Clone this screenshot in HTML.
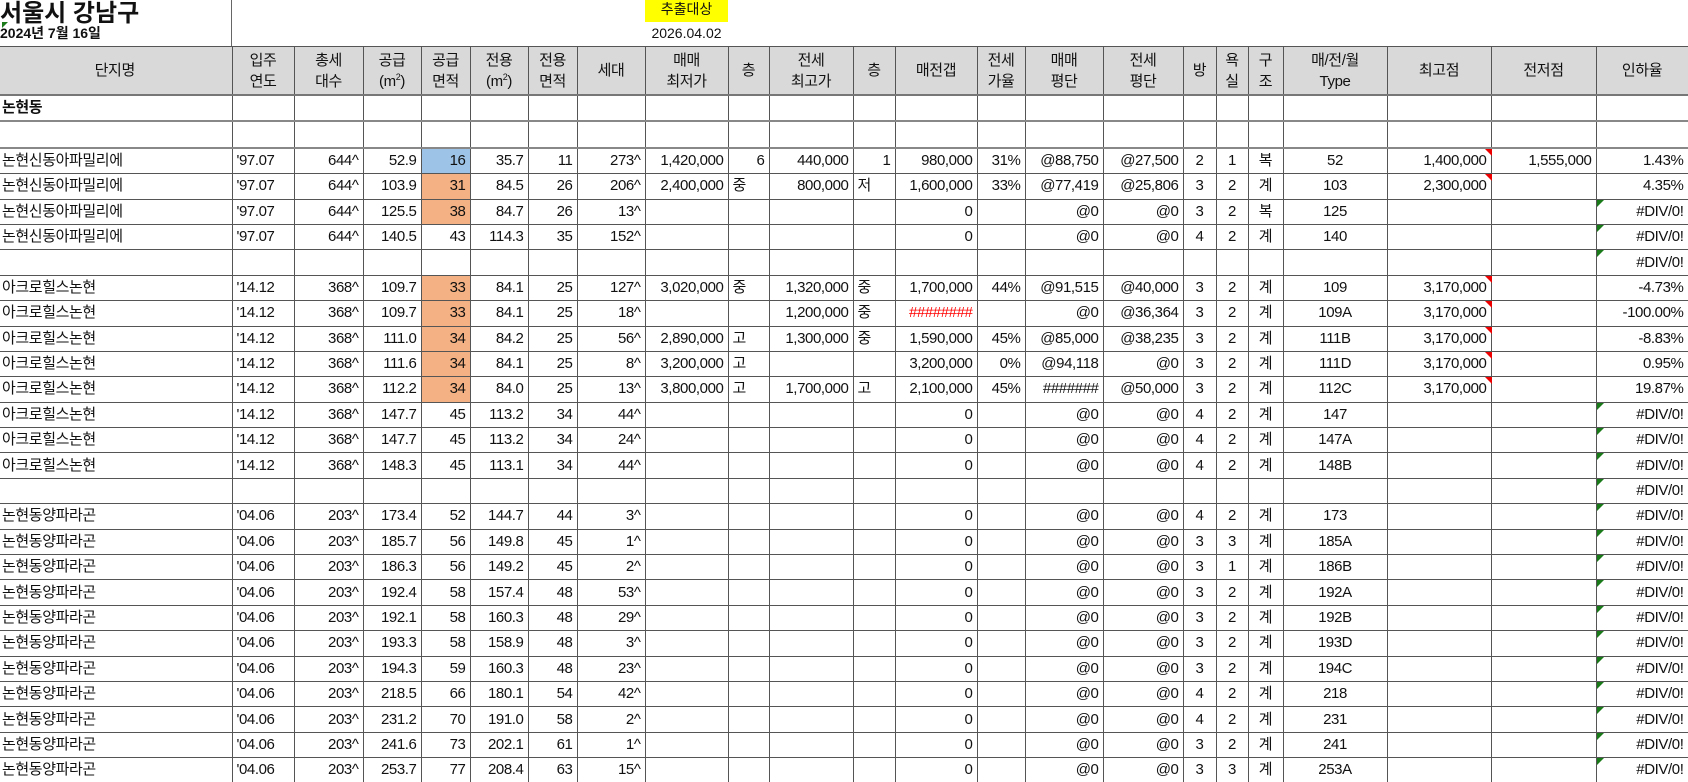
<!DOCTYPE html>
<html><head><meta charset="utf-8">
<style>
html,body{margin:0;padding:0;background:#fff;width:1688px;height:782px;overflow:hidden}
body{font-family:"Liberation Sans","Noto Sans CJK KR",sans-serif;color:#111;position:relative}
.t1{position:absolute;left:0;top:-7px;font-size:24px;font-weight:bold}
.t2{position:absolute;left:0;top:23px;font-size:14px;font-weight:bold}
.gtri{position:absolute;width:0;height:0;border-top:6px solid #1a7a1a;border-right:6px solid transparent}
.yel{position:absolute;left:645px;top:0;width:83px;height:22px;background:#ffff00;font-size:14px;text-align:center;line-height:18px}
.dt{position:absolute;left:645px;top:25px;width:83px;text-align:center;font-size:14px}
.vl{position:absolute;left:231px;top:0;width:1px;height:46px;background:#666}
table{position:absolute;left:0;top:46px;border-collapse:collapse;table-layout:fixed;width:1688px;font-size:15px}
td{border:1px solid #555;padding:0 4px;white-space:nowrap;overflow:visible;height:24.4px;line-height:20px;text-align:right;position:relative;letter-spacing:-0.4px}
tr.h td{background:#d9d9d9;text-align:center;height:47px;line-height:21px;border-bottom:2px solid #777;padding-top:0;padding-bottom:0}
sup{line-height:0;font-size:9px}
td:first-child{text-align:left;border-left:none;padding-left:2px}
td.c{text-align:center}
td.l{text-align:left}
td.b{background:#9dc3e6}
td.o{background:#f4b183}
td.rd{color:#f00}
tr.s td{border-bottom:2px solid #888}
.rt::after{content:"";position:absolute;right:-1px;top:0;border-top:7px solid #e00;border-left:7px solid transparent}
.gt::before{content:"";position:absolute;left:0;top:0;border-top:7px solid #1a7a1a;border-right:7px solid transparent}
</style></head><body>
<div class="t1">서울시 강남구</div>
<div class="gtri" style="left:2px;top:22px"></div>
<div class="t2">2024년 7월 16일</div>
<div class="vl"></div>
<div class="yel">추출대상</div>
<div class="dt">2026.04.02</div>
<table>
<colgroup><col style="width:232px"><col style="width:62px"><col style="width:69px"><col style="width:58px"><col style="width:49px"><col style="width:58px"><col style="width:49px"><col style="width:68px"><col style="width:83px"><col style="width:41px"><col style="width:84px"><col style="width:42px"><col style="width:82px"><col style="width:48px"><col style="width:78px"><col style="width:80px"><col style="width:33px"><col style="width:32px"><col style="width:35px"><col style="width:104px"><col style="width:104px"><col style="width:105px"><col style="width:92px"></colgroup>
<tr class="h"><td style="text-align:center">단지명</td><td>입주<br>연도</td><td>총세<br>대수</td><td>공급<br>(m<sup>2</sup>)</td><td>공급<br>면적</td><td>전용<br>(m<sup>2</sup>)</td><td>전용<br>면적</td><td>세대</td><td>매매<br>최저가</td><td>층</td><td>전세<br>최고가</td><td>층</td><td>매전갭</td><td>전세<br>가율</td><td>매매<br>평단</td><td>전세<br>평단</td><td>방</td><td>욕<br>실</td><td>구<br>조</td><td>매/전/월<br>Type</td><td>최고점</td><td>전저점</td><td>인하율</td></tr>
<tr class="s"><td style="font-weight:bold">논현동</td><td></td><td></td><td></td><td></td><td></td><td></td><td></td><td></td><td></td><td></td><td></td><td></td><td></td><td></td><td></td><td></td><td></td><td></td><td></td><td></td><td></td><td></td></tr>
<tr class="s"><td></td><td></td><td></td><td></td><td></td><td></td><td></td><td></td><td></td><td></td><td></td><td></td><td></td><td></td><td></td><td></td><td></td><td></td><td></td><td></td><td></td><td></td><td></td></tr>
<tr><td>논현신동아파밀리에</td><td class="l">'97.07</td><td>644^</td><td>52.9</td><td class="b">16</td><td>35.7</td><td>11</td><td>273^</td><td>1,420,000</td><td>6</td><td>440,000</td><td>1</td><td>980,000</td><td>31%</td><td>@88,750</td><td>@27,500</td><td class="c">2</td><td class="c">1</td><td class="c">복</td><td class="c">52</td><td class="rt">1,400,000</td><td>1,555,000</td><td>1.43%</td></tr>
<tr><td>논현신동아파밀리에</td><td class="l">'97.07</td><td>644^</td><td>103.9</td><td class="o">31</td><td>84.5</td><td>26</td><td>206^</td><td>2,400,000</td><td class="l">중</td><td>800,000</td><td class="l">저</td><td>1,600,000</td><td>33%</td><td>@77,419</td><td>@25,806</td><td class="c">3</td><td class="c">2</td><td class="c">계</td><td class="c">103</td><td class="rt">2,300,000</td><td></td><td>4.35%</td></tr>
<tr><td>논현신동아파밀리에</td><td class="l">'97.07</td><td>644^</td><td>125.5</td><td class="o">38</td><td>84.7</td><td>26</td><td>13^</td><td></td><td></td><td></td><td></td><td>0</td><td></td><td>@0</td><td>@0</td><td class="c">3</td><td class="c">2</td><td class="c">복</td><td class="c">125</td><td></td><td></td><td class="gt">#DIV/0!</td></tr>
<tr><td>논현신동아파밀리에</td><td class="l">'97.07</td><td>644^</td><td>140.5</td><td>43</td><td>114.3</td><td>35</td><td>152^</td><td></td><td></td><td></td><td></td><td>0</td><td></td><td>@0</td><td>@0</td><td class="c">4</td><td class="c">2</td><td class="c">계</td><td class="c">140</td><td></td><td></td><td class="gt">#DIV/0!</td></tr>
<tr><td></td><td></td><td></td><td></td><td></td><td></td><td></td><td></td><td></td><td></td><td></td><td></td><td></td><td></td><td></td><td></td><td></td><td></td><td></td><td></td><td></td><td></td><td class="gt">#DIV/0!</td></tr>
<tr><td>아크로힐스논현</td><td class="l">'14.12</td><td>368^</td><td>109.7</td><td class="o">33</td><td>84.1</td><td>25</td><td>127^</td><td>3,020,000</td><td class="l">중</td><td>1,320,000</td><td class="l">중</td><td>1,700,000</td><td>44%</td><td>@91,515</td><td>@40,000</td><td class="c">3</td><td class="c">2</td><td class="c">계</td><td class="c">109</td><td class="rt">3,170,000</td><td></td><td>-4.73%</td></tr>
<tr><td>아크로힐스논현</td><td class="l">'14.12</td><td>368^</td><td>109.7</td><td class="o">33</td><td>84.1</td><td>25</td><td>18^</td><td></td><td></td><td>1,200,000</td><td class="l">중</td><td class="rd">########</td><td></td><td>@0</td><td>@36,364</td><td class="c">3</td><td class="c">2</td><td class="c">계</td><td class="c">109A</td><td class="rt">3,170,000</td><td></td><td>-100.00%</td></tr>
<tr><td>아크로힐스논현</td><td class="l">'14.12</td><td>368^</td><td>111.0</td><td class="o">34</td><td>84.2</td><td>25</td><td>56^</td><td>2,890,000</td><td class="l">고</td><td>1,300,000</td><td class="l">중</td><td>1,590,000</td><td>45%</td><td>@85,000</td><td>@38,235</td><td class="c">3</td><td class="c">2</td><td class="c">계</td><td class="c">111B</td><td class="rt">3,170,000</td><td></td><td>-8.83%</td></tr>
<tr><td>아크로힐스논현</td><td class="l">'14.12</td><td>368^</td><td>111.6</td><td class="o">34</td><td>84.1</td><td>25</td><td>8^</td><td>3,200,000</td><td class="l">고</td><td></td><td></td><td>3,200,000</td><td>0%</td><td>@94,118</td><td>@0</td><td class="c">3</td><td class="c">2</td><td class="c">계</td><td class="c">111D</td><td class="rt">3,170,000</td><td></td><td>0.95%</td></tr>
<tr><td>아크로힐스논현</td><td class="l">'14.12</td><td>368^</td><td>112.2</td><td class="o">34</td><td>84.0</td><td>25</td><td>13^</td><td>3,800,000</td><td class="l">고</td><td>1,700,000</td><td class="l">고</td><td>2,100,000</td><td>45%</td><td>#######</td><td>@50,000</td><td class="c">3</td><td class="c">2</td><td class="c">계</td><td class="c">112C</td><td class="rt">3,170,000</td><td></td><td>19.87%</td></tr>
<tr><td>아크로힐스논현</td><td class="l">'14.12</td><td>368^</td><td>147.7</td><td>45</td><td>113.2</td><td>34</td><td>44^</td><td></td><td></td><td></td><td></td><td>0</td><td></td><td>@0</td><td>@0</td><td class="c">4</td><td class="c">2</td><td class="c">계</td><td class="c">147</td><td></td><td></td><td class="gt">#DIV/0!</td></tr>
<tr><td>아크로힐스논현</td><td class="l">'14.12</td><td>368^</td><td>147.7</td><td>45</td><td>113.2</td><td>34</td><td>24^</td><td></td><td></td><td></td><td></td><td>0</td><td></td><td>@0</td><td>@0</td><td class="c">4</td><td class="c">2</td><td class="c">계</td><td class="c">147A</td><td></td><td></td><td class="gt">#DIV/0!</td></tr>
<tr><td>아크로힐스논현</td><td class="l">'14.12</td><td>368^</td><td>148.3</td><td>45</td><td>113.1</td><td>34</td><td>44^</td><td></td><td></td><td></td><td></td><td>0</td><td></td><td>@0</td><td>@0</td><td class="c">4</td><td class="c">2</td><td class="c">계</td><td class="c">148B</td><td></td><td></td><td class="gt">#DIV/0!</td></tr>
<tr><td></td><td></td><td></td><td></td><td></td><td></td><td></td><td></td><td></td><td></td><td></td><td></td><td></td><td></td><td></td><td></td><td></td><td></td><td></td><td></td><td></td><td></td><td class="gt">#DIV/0!</td></tr>
<tr><td>논현동양파라곤</td><td class="l">'04.06</td><td>203^</td><td>173.4</td><td>52</td><td>144.7</td><td>44</td><td>3^</td><td></td><td></td><td></td><td></td><td>0</td><td></td><td>@0</td><td>@0</td><td class="c">4</td><td class="c">2</td><td class="c">계</td><td class="c">173</td><td></td><td></td><td class="gt">#DIV/0!</td></tr>
<tr><td>논현동양파라곤</td><td class="l">'04.06</td><td>203^</td><td>185.7</td><td>56</td><td>149.8</td><td>45</td><td>1^</td><td></td><td></td><td></td><td></td><td>0</td><td></td><td>@0</td><td>@0</td><td class="c">3</td><td class="c">3</td><td class="c">계</td><td class="c">185A</td><td></td><td></td><td class="gt">#DIV/0!</td></tr>
<tr><td>논현동양파라곤</td><td class="l">'04.06</td><td>203^</td><td>186.3</td><td>56</td><td>149.2</td><td>45</td><td>2^</td><td></td><td></td><td></td><td></td><td>0</td><td></td><td>@0</td><td>@0</td><td class="c">3</td><td class="c">1</td><td class="c">계</td><td class="c">186B</td><td></td><td></td><td class="gt">#DIV/0!</td></tr>
<tr><td>논현동양파라곤</td><td class="l">'04.06</td><td>203^</td><td>192.4</td><td>58</td><td>157.4</td><td>48</td><td>53^</td><td></td><td></td><td></td><td></td><td>0</td><td></td><td>@0</td><td>@0</td><td class="c">3</td><td class="c">2</td><td class="c">계</td><td class="c">192A</td><td></td><td></td><td class="gt">#DIV/0!</td></tr>
<tr><td>논현동양파라곤</td><td class="l">'04.06</td><td>203^</td><td>192.1</td><td>58</td><td>160.3</td><td>48</td><td>29^</td><td></td><td></td><td></td><td></td><td>0</td><td></td><td>@0</td><td>@0</td><td class="c">3</td><td class="c">2</td><td class="c">계</td><td class="c">192B</td><td></td><td></td><td class="gt">#DIV/0!</td></tr>
<tr><td>논현동양파라곤</td><td class="l">'04.06</td><td>203^</td><td>193.3</td><td>58</td><td>158.9</td><td>48</td><td>3^</td><td></td><td></td><td></td><td></td><td>0</td><td></td><td>@0</td><td>@0</td><td class="c">3</td><td class="c">2</td><td class="c">계</td><td class="c">193D</td><td></td><td></td><td class="gt">#DIV/0!</td></tr>
<tr><td>논현동양파라곤</td><td class="l">'04.06</td><td>203^</td><td>194.3</td><td>59</td><td>160.3</td><td>48</td><td>23^</td><td></td><td></td><td></td><td></td><td>0</td><td></td><td>@0</td><td>@0</td><td class="c">3</td><td class="c">2</td><td class="c">계</td><td class="c">194C</td><td></td><td></td><td class="gt">#DIV/0!</td></tr>
<tr><td>논현동양파라곤</td><td class="l">'04.06</td><td>203^</td><td>218.5</td><td>66</td><td>180.1</td><td>54</td><td>42^</td><td></td><td></td><td></td><td></td><td>0</td><td></td><td>@0</td><td>@0</td><td class="c">4</td><td class="c">2</td><td class="c">계</td><td class="c">218</td><td></td><td></td><td class="gt">#DIV/0!</td></tr>
<tr><td>논현동양파라곤</td><td class="l">'04.06</td><td>203^</td><td>231.2</td><td>70</td><td>191.0</td><td>58</td><td>2^</td><td></td><td></td><td></td><td></td><td>0</td><td></td><td>@0</td><td>@0</td><td class="c">4</td><td class="c">2</td><td class="c">계</td><td class="c">231</td><td></td><td></td><td class="gt">#DIV/0!</td></tr>
<tr><td>논현동양파라곤</td><td class="l">'04.06</td><td>203^</td><td>241.6</td><td>73</td><td>202.1</td><td>61</td><td>1^</td><td></td><td></td><td></td><td></td><td>0</td><td></td><td>@0</td><td>@0</td><td class="c">3</td><td class="c">2</td><td class="c">계</td><td class="c">241</td><td></td><td></td><td class="gt">#DIV/0!</td></tr>
<tr><td>논현동양파라곤</td><td class="l">'04.06</td><td>203^</td><td>253.7</td><td>77</td><td>208.4</td><td>63</td><td>15^</td><td></td><td></td><td></td><td></td><td>0</td><td></td><td>@0</td><td>@0</td><td class="c">3</td><td class="c">3</td><td class="c">계</td><td class="c">253A</td><td></td><td></td><td class="gt">#DIV/0!</td></tr>
</table>
</body></html>
